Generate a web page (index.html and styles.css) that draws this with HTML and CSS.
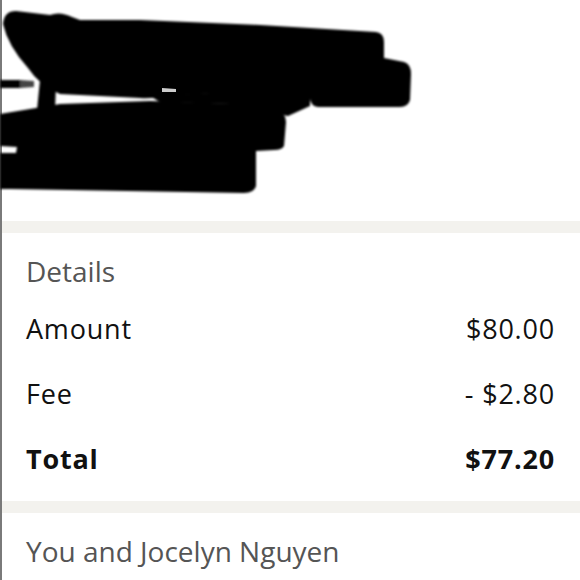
FILE: index.html
```html
<!DOCTYPE html>
<html>
<head>
<meta charset="utf-8">
<link rel="stylesheet" href="styles.css">
</head>
<body>
<div class="page">
  <div class="top">
    <svg class="redact" width="580" height="221" viewBox="0 0 580 221">
      <defs>
        <filter id="soft" x="-5%" y="-5%" width="110%" height="110%">
          <feGaussianBlur stdDeviation="1.1"/>
        </filter>
      </defs>
      <g fill="#050505" filter="url(#soft)">
        <path d="M3 24 Q4 11 16 11 L50 15 Q60 11 72 17 L80 20 L140 20 L260 25 L376 32 Q384 33 384 42 L384 58 L404 62 Q411 64 411 74 L410 100 Q408 107 400 107 L318 107 Q311 106 310 99 L310 90 L200 94 L170 96 Q150 99 140 98 L60 94 Q40 86 28 68 Q8 46 3 24 Z"/>
        <path d="M150 96 L310 88 L310 106 L288 116 L230 104 L160 102 Z"/>
        <path d="M52 17 L64 19 L57 60 L55 110 L37 110 L42 60 Z"/>
        <path d="M0 80 L22 80 L22 88 L0 88 Z"/>
        <path fill="#444" d="M20 80 L34 81 L34 87 L20 88 Z"/>
        <path d="M0 114 L60 104 L150 101 L240 104 L278 112 Q286 114 286 122 L284 146 Q282 150 274 150 L256 151 Q256 154 256 158 L256 186 Q254 193 244 193 L10 189 L0 189 L0 153 L16 153 L17 147 L0 146 Z"/>
      </g>
      <path d="M162 88 L176 89 L176 92 L162 92 Z" fill="#ffffff" opacity="0.8"/>
    </svg>
  </div>
  <div class="band"></div>
  <section class="details">
    <h2 class="heading">Details</h2>
    <div class="row"><span>Amount</span><span>$80.00</span></div>
    <div class="row"><span>Fee</span><span>- $2.80</span></div>
    <div class="row total"><span>Total</span><span>$77.20</span></div>
  </section>
  <div class="band"></div>
  <section class="people">
    <h2 class="heading">You and Jocelyn Nguyen</h2>
  </section>
</div>
</body>
</html>
```

FILE: styles.css
```css
html, body {
  margin: 0;
  padding: 0;
  background: #ffffff;
}
body {
  font-family: "Open Sans", Lato, sans-serif;
  overflow: hidden;
}
.page {
  width: 578px;
  height: 580px;
  border-left: 2px solid #7a7a7a;
  display: flex;
  flex-direction: column;
}
.top {
  height: 221px;
  flex: none;
}
.redact {
  display: block;
  margin-left: -2px;
}
.band {
  height: 12px;
  flex: none;
  background: #f3f2ee;
}
.details {
  padding: 18px 25px 10px 24px;
  flex: none;
  height: 268px;
  box-sizing: border-box;
}
.heading {
  margin: 0 0 5px 0;
  font-size: 28px;
  line-height: 40px;
  font-weight: 400;
  color: #555555;
}
.row {
  display: flex;
  justify-content: space-between;
  font-size: 27px;
  line-height: 65px;
  letter-spacing: 0.8px;
  color: #111111;
}
.total {
  font-weight: 700;
}
.people {
  padding: 18px 24px 0 24px;
}
```
